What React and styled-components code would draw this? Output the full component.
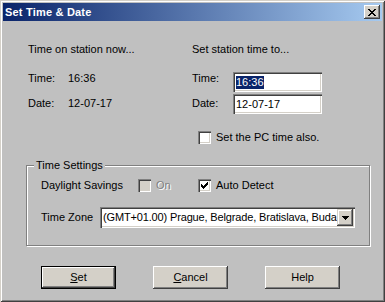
import React from "react";
import styled, { createGlobalStyle } from "styled-components";

const GlobalStyle = createGlobalStyle`
  html, body {
    margin: 0;
    padding: 0;
    background: #c0c0c0;
  }
  body {
    font-family: "Liberation Sans", Arial, sans-serif;
    font-size: 11px;
    line-height: 13px;
    color: #000;
  }
`;

const Window = styled.div`
  box-sizing: border-box;
  width: 385px;
  height: 302px;
  padding: 3px;
  background: #c0c0c0;
  box-shadow: inset 1px 1px #d4d0c8, inset -1px -1px #404040,
    inset 2px 2px #fff, inset -2px -2px #808080;
  display: flex;
  flex-direction: column;
`;

const TitleBar = styled.div`
  height: 18px;
  display: flex;
  align-items: center;
  justify-content: space-between;
  padding: 0 2px 0 2px;
  background: linear-gradient(to right, #0a246a, #a6caf0);
`;

const TitleText = styled.span`
  color: #fff;
  font-weight: bold;
  font-size: 11px;
  letter-spacing: 0.2px;
`;

const CloseButton = styled.div`
  box-sizing: border-box;
  width: 16px;
  height: 14px;
  display: flex;
  align-items: center;
  justify-content: center;
  background: #d4d0c8;
  box-shadow: inset -1px -1px #404040, inset 1px 1px #fff,
    inset -2px -2px #808080;
`;

const Body = styled.div`
  padding: 22px 0 0 23px;
`;

const TopGrid = styled.div`
  margin-left: 2px;
  display: grid;
  grid-template-columns: 40px 124px 41px 89px;
  grid-template-rows: 29px 22px 37px 13px;
  align-items: start;
`;

const Heading = styled.div`
  grid-column: ${(p) => p.$col};
  white-space: nowrap;
`;

const Cell = styled.div`
  padding-top: ${(p) => p.$top || 0}px;
  white-space: nowrap;
`;

const Field = styled.div`
  box-sizing: border-box;
  width: 89px;
  height: 20px;
  padding: 0 3px;
  display: flex;
  align-items: center;
  background: #fff;
  box-shadow: inset 1px 1px #808080, inset 2px 2px #404040,
    inset -1px -1px #fff, inset -2px -2px #d4d0c8;
`;

const Selected = styled.span`
  background: #0a246a;
  color: #fff;
`;

const CheckRow = styled.div`
  grid-column: 3 / 5;
  margin-left: 6px;
  display: flex;
  align-items: center;
  gap: 5px;
  white-space: nowrap;
`;

const Box = styled.div`
  box-sizing: border-box;
  width: 13px;
  height: 13px;
  flex: none;
  display: flex;
  align-items: center;
  justify-content: center;
  background: ${(p) => (p.$disabled ? "#d4d0c8" : "#fff")};
  box-shadow: inset 1px 1px #808080, inset 2px 2px #404040,
    inset -1px -1px #fff, inset -2px -2px #d4d0c8;
`;

const Group = styled.div`
  position: relative;
  box-sizing: border-box;
  width: 344px;
  margin-top: 21px;
  padding: 13px 0 17px 14px;
  border: 1px solid #808080;
  box-shadow: inset 1px 1px #fff, 1px 1px #fff;
`;

const Legend = styled.span`
  position: absolute;
  top: -7px;
  left: 7px;
  padding: 0 2px;
  background: #c0c0c0;
`;

const GroupRow = styled.div`
  display: flex;
  align-items: center;
  height: ${(p) => p.$h}px;
  margin-top: ${(p) => p.$mt || 0}px;
  white-space: nowrap;
`;

const RowLabel = styled.span`
  width: ${(p) => p.$w}px;
  flex: none;
`;

const CheckItem = styled.label`
  display: flex;
  align-items: center;
  gap: 5px;
  width: ${(p) => (p.$w ? `${p.$w}px` : "auto")};
  color: ${(p) => (p.$disabled ? "#808080" : "#000")};
  text-shadow: ${(p) => (p.$disabled ? "1px 1px #fff" : "none")};
`;

const Select = styled.div`
  box-sizing: border-box;
  width: 255px;
  height: 21px;
  padding: 2px;
  display: flex;
  background: #fff;
  box-shadow: inset 1px 1px #808080, inset 2px 2px #404040,
    inset -1px -1px #fff, inset -2px -2px #d4d0c8;
`;

const SelectText = styled.div`
  flex: 1;
  white-space: nowrap;
  padding-left: 1px;
  line-height: 17px;
  letter-spacing: -0.15px;
`;

const SelectButton = styled.div`
  box-sizing: border-box;
  width: 16px;
  height: 17px;
  flex: none;
  display: flex;
  align-items: center;
  justify-content: center;
  background: #d4d0c8;
  box-shadow: inset -1px -1px #404040, inset 1px 1px #d4d0c8,
    inset -2px -2px #808080, inset 2px 2px #fff;
`;

const ButtonRow = styled.div`
  display: flex;
  gap: 37px;
  margin: 20px 0 0 15px;
`;

const Button = styled.div`
  box-sizing: border-box;
  width: 75px;
  height: 23px;
  display: flex;
  align-items: center;
  justify-content: center;
  background: #d4d0c8;
  border: ${(p) => (p.$default ? "1px solid #000" : "none")};
  box-shadow: inset -1px -1px #404040, inset 1px 1px #fff,
    inset -2px -2px #808080, inset 2px 2px #d4d0c8;
`;

function CloseGlyph() {
  const rows = [
    [0, 1, 6, 7],
    [1, 2, 5, 6],
    [2, 3, 4, 5],
    [3, 4],
    [2, 3, 4, 5],
    [1, 2, 5, 6],
    [0, 1, 6, 7],
  ];
  return (
    <svg width="8" height="7" shapeRendering="crispEdges">
      {rows.map((cols, y) =>
        cols.map((x) => <rect key={`${x}-${y}`} x={x} y={y} width="1" height="1" fill="#000" />)
      )}
    </svg>
  );
}

function CheckGlyph() {
  const starts = [2, 3, 4, 3, 2, 1, 0];
  return (
    <svg width="7" height="7" shapeRendering="crispEdges">
      {starts.map((y, x) => (
        <rect key={x} x={x} y={y} width="1" height="3" fill="#000" />
      ))}
    </svg>
  );
}

function ArrowGlyph() {
  return (
    <svg width="7" height="4" shapeRendering="crispEdges">
      <rect x="0" y="0" width="7" height="1" fill="#000" />
      <rect x="1" y="1" width="5" height="1" fill="#000" />
      <rect x="2" y="2" width="3" height="1" fill="#000" />
      <rect x="3" y="3" width="1" height="1" fill="#000" />
    </svg>
  );
}

export default function App() {
  return (
    <>
      <GlobalStyle />
      <Window>
        <TitleBar>
          <TitleText>Set Time &amp; Date</TitleText>
          <CloseButton>
            <CloseGlyph />
          </CloseButton>
        </TitleBar>
        <Body>
          <TopGrid>
            <Heading $col="1 / 3">Time on station now...</Heading>
            <Heading $col="3 / 5">Set station time to...</Heading>

            <Cell>Time:</Cell>
            <Cell>16:36</Cell>
            <Cell>Time:</Cell>
            <Field>
              <Selected>16:36</Selected>
            </Field>

            <Cell $top={3}>Date:</Cell>
            <Cell $top={3}>12-07-17</Cell>
            <Cell $top={3}>Date:</Cell>
            <Field>12-07-17</Field>

            <CheckRow>
              <Box />
              <span>Set the PC time also.</span>
            </CheckRow>
          </TopGrid>

          <Group>
            <Legend>Time Settings</Legend>
            <GroupRow $h={13}>
              <RowLabel $w={97}>Daylight Savings</RowLabel>
              <CheckItem $w={60} $disabled>
                <Box $disabled />
                On
              </CheckItem>
              <CheckItem>
                <Box>
                  <CheckGlyph />
                </Box>
                Auto Detect
              </CheckItem>
            </GroupRow>
            <GroupRow $h={21} $mt={15}>
              <RowLabel $w={59}>Time Zone</RowLabel>
              <Select>
                <SelectText>(GMT+01.00) Prague, Belgrade, Bratislava, Buda</SelectText>
                <SelectButton>
                  <ArrowGlyph />
                </SelectButton>
              </Select>
            </GroupRow>
          </Group>

          <ButtonRow>
            <Button $default>
              <span>
                <u>S</u>et
              </span>
            </Button>
            <Button>
              <span>
                <u>C</u>ancel
              </span>
            </Button>
            <Button>Help</Button>
          </ButtonRow>
        </Body>
      </Window>
    </>
  );
}
